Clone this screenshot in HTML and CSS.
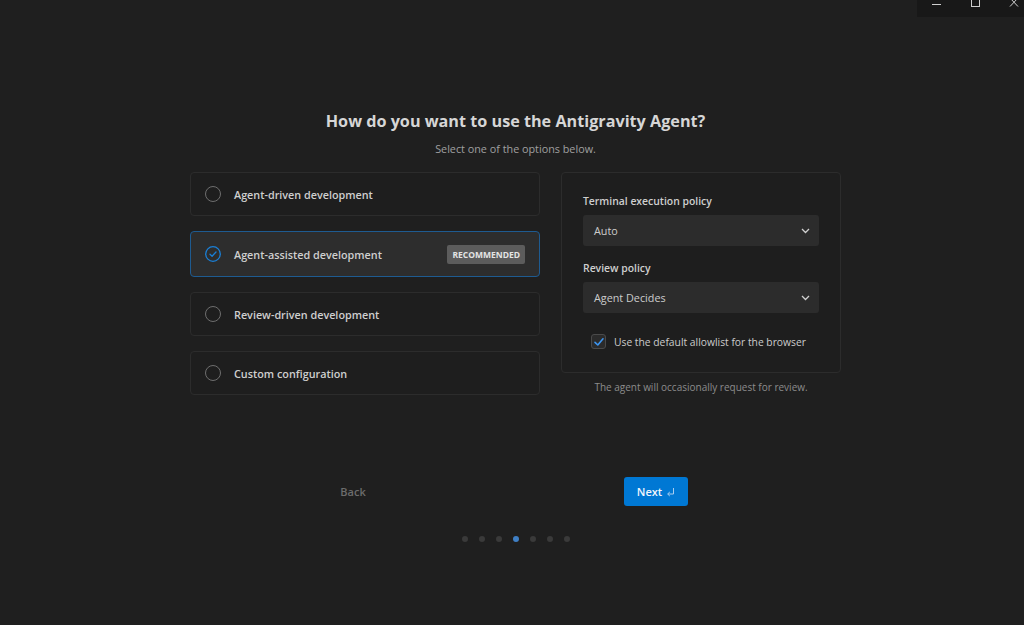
FILE: index.html
```html
<!DOCTYPE html>
<html lang="en">

<head>
  <meta charset="UTF-8">
  <title>Antigravity Setup</title>
  <link rel="stylesheet" href="styles.css">
</head>

<body>

  <!-- window controls (cut off at the top of the capture) -->
  <div class="window-controls">
    <svg width="107" height="17" viewBox="0 0 107 17">
      <line x1="15" y1="4.5" x2="24" y2="4.5" stroke="#cfcfcf" stroke-width="1" />
      <rect x="54.5" y="-3.5" width="8" height="10" fill="none" stroke="#cfcfcf" stroke-width="1" />
      <line x1="93" y1="-2" x2="101" y2="6.5" stroke="#cfcfcf" stroke-width="1" />
      <line x1="101" y1="-2" x2="93" y2="6.5" stroke="#cfcfcf" stroke-width="1" />
    </svg>
  </div>

  <div class="page">
    <h1 class="title">How do you want to use the Antigravity Agent?</h1>
    <p class="subtitle">Select one of the options below.</p>

    <div class="columns">
      <div class="options">
        <div class="option">
          <span class="radio"></span>
          <span class="option-label">Agent-driven development</span>
        </div>
        <div class="option selected">
          <span class="radio">
            <svg width="16" height="16" viewBox="0 0 16 16">
              <circle cx="8" cy="8" r="7.3" fill="none" stroke="#1a7fd6" stroke-width="1.3" />
              <path d="M5 8.2 L7.1 10.2 L11 6" fill="none" stroke="#1a7fd6" stroke-width="1.3" stroke-linecap="round" stroke-linejoin="round" />
            </svg>
          </span>
          <span class="option-label">Agent-assisted development</span>
          <span class="badge">RECOMMENDED</span>
        </div>
        <div class="option">
          <span class="radio"></span>
          <span class="option-label">Review-driven development</span>
        </div>
        <div class="option">
          <span class="radio"></span>
          <span class="option-label">Custom configuration</span>
        </div>
      </div>

      <div class="settings">
        <div class="panel">
          <label class="field-label">Terminal execution policy</label>
          <div class="select">
            <span>Auto</span>
            <svg class="chevron" width="9" height="6" viewBox="0 0 9 6">
              <path d="M1 1 L4.5 4.5 L8 1" fill="none" stroke="#d0d0d0" stroke-width="1.3" />
            </svg>
          </div>
          <label class="field-label">Review policy</label>
          <div class="select">
            <span>Agent Decides</span>
            <svg class="chevron" width="9" height="6" viewBox="0 0 9 6">
              <path d="M1 1 L4.5 4.5 L8 1" fill="none" stroke="#d0d0d0" stroke-width="1.3" />
            </svg>
          </div>
          <div class="check-row">
            <span class="checkbox">
              <svg width="12" height="12" viewBox="0 0 12 12">
                <path d="M2 6.3 L4.8 9 L10 2.8" fill="none" stroke="#3c95f0" stroke-width="1.6" stroke-linecap="round" stroke-linejoin="round" />
              </svg>
            </span>
            <span>Use the default allowlist for the browser</span>
          </div>
        </div>
        <p class="caption">The agent will occasionally request for review.</p>
      </div>
    </div>

    <div class="actions">
      <button class="back-btn">Back</button>
      <button class="next-btn">Next
        <svg width="9" height="10" viewBox="0 0 9 10">
          <path d="M7.5 1 V7 H2" fill="none" stroke="#a9cdf0" stroke-width="1" />
          <path d="M3.8 5 L1.6 7 L3.8 9" fill="none" stroke="#a9cdf0" stroke-width="1" />
        </svg>
      </button>
    </div>

    <div class="dots">
      <span class="dot"></span>
      <span class="dot"></span>
      <span class="dot"></span>
      <span class="dot active"></span>
      <span class="dot"></span>
      <span class="dot"></span>
      <span class="dot"></span>
    </div>
  </div>

</body>

</html>
```

FILE: styles.css
```css
* {
  margin: 0;
  padding: 0;
  box-sizing: border-box;
  font-family: "Open Sans", "Noto Sans", sans-serif;
}

body {
  width: 1024px;
  height: 625px;
  background-color: #1f1f1f;
  color: #cccccc;
  overflow: hidden;
  position: relative;
}

.window-controls {
  position: absolute;
  top: 0;
  right: 0;
  width: 107px;
  height: 17px;
  background-color: #181818;
}

.window-controls svg {
  display: block;
}

.page {
  padding-top: 110px;
  padding-left: 7px;
  display: flex;
  flex-direction: column;
  align-items: center;
}

.title {
  font-size: 16.2px;
  font-weight: 700;
  line-height: 22px;
  color: #d6d6d6;
}

.subtitle {
  margin-top: 9px;
  font-size: 10.8px;
  line-height: 16px;
  color: #a0a0a0;
}

/* two columns: options on the left, settings on the right */
.columns {
  margin-top: 15px;
  display: flex;
  gap: 21px;
  align-items: flex-start;
}

.options {
  width: 350px;
  display: flex;
  flex-direction: column;
  gap: 15px;
}

.option {
  height: 44px;
  padding: 0 14px;
  display: flex;
  align-items: center;
  border: 1px solid #2c2c2c;
  border-radius: 4px;
  background-color: #1e1e1e;
}

.option.selected {
  height: 46px;
  background-color: #2d2d2d;
  border-color: #1e5b91;
}

.radio {
  width: 16px;
  height: 16px;
  border: 1px solid #6e6e6e;
  border-radius: 50%;
  margin-right: 13px;
  flex-shrink: 0;
}

.option.selected .radio {
  border: none;
}

.radio svg {
  display: block;
}

.option-label {
  flex: 1;
  font-size: 10.8px;
  font-weight: 600;
  color: #cfcfcf;
}

.badge {
  background-color: #5c5c5c;
  color: #e4e4e4;
  font-size: 8.5px;
  font-weight: 700;
  padding: 3px 5px;
  border-radius: 2px;
  line-height: 13px;
}

.settings {
  width: 280px;
}

.panel {
  height: 201px;
  padding: 20px 21px 0 21px;
  border: 1px solid #2c2c2c;
  border-radius: 4px;
  background-color: #1e1e1e;
}

.field-label {
  display: block;
  font-size: 10.4px;
  font-weight: 600;
  line-height: 16px;
  color: #cfcfcf;
}

.select {
  margin-top: 6px;
  margin-bottom: 14px;
  height: 31px;
  padding: 0 9px 0 11px;
  display: flex;
  align-items: center;
  justify-content: space-between;
  background-color: #2c2c2c;
  border-radius: 3px;
  font-size: 10.8px;
  color: #cccccc;
}

.chevron {
  display: block;
}

.check-row {
  margin-top: 21px;
  padding-left: 8px;
  display: flex;
  align-items: center;
  gap: 8px;
  font-size: 10.3px;
  white-space: nowrap;
  color: #cccccc;
}

.checkbox {
  width: 15px;
  height: 15px;
  border: 1px solid #4a4a4a;
  border-radius: 3px;
  background-color: #2b2b2b;
  display: flex;
  align-items: center;
  justify-content: center;
  flex-shrink: 0;
}

.checkbox svg {
  display: block;
}

.caption {
  margin-top: 7px;
  text-align: center;
  font-size: 10px;
  line-height: 14px;
  color: #8c8c8c;
}

.actions {
  margin-top: 82px;
  margin-left: -22px;
  display: flex;
  gap: 239px;
}

.actions button {
  width: 64px;
  height: 29px;
  border: none;
  border-radius: 3px;
  font-size: 11px;
  font-weight: 600;
  cursor: pointer;
}

.back-btn {
  background: transparent;
  color: #6c6c6c;
}

.next-btn {
  background-color: #0078d4;
  color: #f0f6fc;
  display: flex;
  align-items: center;
  justify-content: center;
  gap: 4px;
}

.dots {
  margin-top: 30px;
  display: flex;
  gap: 11px;
}

.dot {
  width: 6px;
  height: 6px;
  border-radius: 50%;
  background-color: #3a3a3a;
}

.dot.active {
  background-color: #3f7fc4;
}
```
